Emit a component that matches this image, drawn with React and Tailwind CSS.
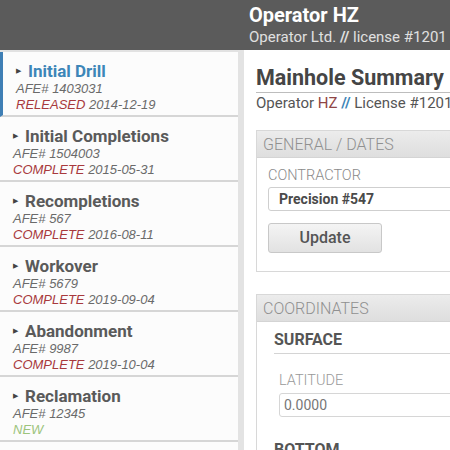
import React from 'react';

const items = [
  { title: 'Initial Drill', afe: '1403031', status: 'RELEASED', date: '2014-12-19', active: true },
  { title: 'Initial Completions', afe: '1504003', status: 'COMPLETE', date: '2015-05-31' },
  { title: 'Recompletions', afe: '567', status: 'COMPLETE', date: '2016-08-11' },
  { title: 'Workover', afe: '5679', status: 'COMPLETE', date: '2019-09-04' },
  { title: 'Abandonment', afe: '9987', status: 'COMPLETE', date: '2019-10-04' },
  { title: 'Reclamation', afe: '12345', status: 'NEW', date: '' },
];

function SideItem({ item }) {
  return (
    <div
      className={`h-[65px] border-b-2 border-[#d6d6d6] pl-[13px] pt-[9px] ${
        item.active ? 'border-l-[3px] border-l-[#3f7fb5] pl-[10px]' : ''
      }`}
    >
      <div className="flex items-center gap-[7px]">
        <span className="text-[7px] leading-none text-[#444]">&#9654;</span>
        <span
          className={`font-['Roboto',sans-serif] text-[17px] font-bold leading-[20px] ${
            item.active ? 'text-[#3d86b8]' : 'text-[#5a5a5a]'
          }`}
        >
          {item.title}
        </span>
      </div>
      <div className="font-['Liberation_Sans',Arial,sans-serif] text-[13px] italic leading-[16px] text-[#6a6a6a]">
        AFE# {item.afe}
      </div>
      <div className="font-['Liberation_Sans',Arial,sans-serif] text-[13px] italic leading-[16px]">
        {item.status === 'NEW' ? (
          <span className="text-[#9dc47c]">NEW</span>
        ) : (
          <>
            <span className="text-[#a8393d]">{item.status}</span>{' '}
            <span className="text-[#6a6a6a]">{item.date}</span>
          </>
        )}
      </div>
    </div>
  );
}

function Panel({ title, children }) {
  return (
    <div className="border border-[#d8d8d8] bg-white">
      <div className="h-[27px] bg-gradient-to-b from-[#ececec] to-[#dedede] border-b border-[#d4d4d4] px-[6px] font-['Roboto',sans-serif] text-[16px] font-light leading-[27px] text-[#909090]">
        {title}
      </div>
      {children}
    </div>
  );
}

export default function App() {
  return (
    <div className="w-[450px] h-[450px] overflow-hidden bg-white font-['Roboto',sans-serif]">
      <div className="h-[50px] bg-[#5b5b5b] flex">
        <div className="w-[244px] shrink-0" />
        <div className="pl-[5px] pt-[3px] whitespace-nowrap">
          <div className="text-[20px] font-bold leading-[25px] text-white">Operator HZ</div>
          <div className="text-[15px] leading-[18px] text-[#e0e0e0]">
            Operator Ltd. <span className="font-bold">//</span> license #1201 <span className="font-bold">//</span>
          </div>
        </div>
      </div>
      <div className="flex h-[400px]">
        <div className="w-[238px] shrink-0 border-t-2 border-[#e2e2e2] bg-[#fcfcfc]">
          {items.map((it) => (
            <SideItem key={it.title} item={it} />
          ))}
        </div>
        <div className="w-[6px] shrink-0 bg-[#e3e3e3]" />
        <div className="flex-1 min-w-0 pl-[12px] whitespace-nowrap">
          <div className="pt-[15px] text-[21.5px] font-bold leading-[26px] text-[#454545]">Mainhole Summary</div>
          <div className="h-px bg-[#bdbdbd] mt-[1px]" />
          <div className="text-[15px] leading-[20px] text-[#555]">
            Operator <span className="text-[#8f4545]">HZ</span> <span className="font-bold text-[#3d86b8]">//</span> License #1201
          </div>
          <div className="mt-[17px] -mr-[40px]">
            <Panel title="GENERAL / DATES">
              <div className="px-[11px] pt-[9px] pb-[18px]">
                <div className="text-[14.5px] font-light leading-[18px] text-[#8a8a8a]">CONTRACTOR</div>
                <div className="mt-[2px] h-[24px] rounded-[3px] border border-[#cfcfcf] px-[10px] text-[14px] font-bold leading-[22px] text-[#4a4a4a]">
                  Precision #547
                </div>
                <button className="mt-[12px] h-[30px] w-[114px] rounded-[3px] border border-[#c8c8c8] bg-gradient-to-b from-[#f4f4f4] to-[#e2e2e2] text-[16px] font-medium text-[#555]">
                  Update
                </button>
              </div>
            </Panel>
          </div>
          <div className="mt-[22px] -mr-[40px]">
            <Panel title="COORDINATES">
              <div className="px-[17px] pt-[7px]">
                <div className="text-[16px] font-bold leading-[22px] text-[#555]">SURFACE</div>
                <div className="h-px bg-[#d4d4d4] mt-[2px]" />
                <div className="px-[5px] pt-[18px]">
                  <div className="text-[14.5px] font-light leading-[18px] text-[#999]">LATITUDE</div>
                  <div className="mt-[3px] h-[24px] rounded-[3px] border border-[#d6d6d6] px-[4px] text-[14px] leading-[22px] text-[#777]">
                    0.0000
                  </div>
                </div>
                <div className="pt-[22px] text-[16px] font-bold leading-[22px] text-[#555]">BOTTOM</div>
              </div>
            </Panel>
          </div>
        </div>
      </div>
    </div>
  );
}
